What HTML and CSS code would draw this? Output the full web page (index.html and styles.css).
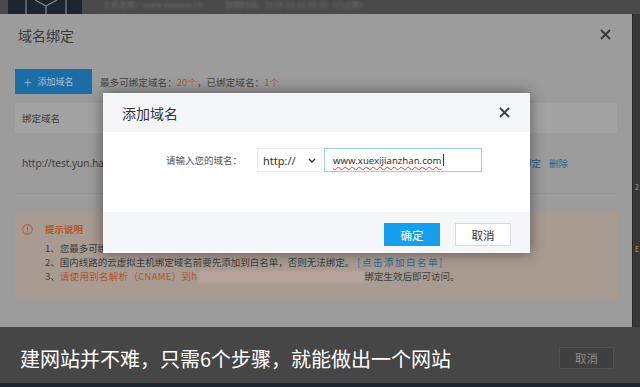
FILE: index.html
```html
<!DOCTYPE html>
<html lang="zh-CN">

<head>
    <meta charset="UTF-8">
    <title>域名绑定</title>
    <link rel="stylesheet" href="styles.css">
</head>

<body>
    <div class="screen">
        <!-- Верхняя полоска страницы за диалогом -->
        <div class="topbar">
            <div class="logo">
                <svg width="74" height="14" viewBox="0 0 74 14" fill="none" stroke="#7d8893" stroke-width="1.2">
                    <line x1="18" y1="0" x2="18" y2="14"></line>
                    <line x1="58" y1="0" x2="58" y2="14"></line>
                    <line x1="27" y1="0" x2="38" y2="6"></line>
                    <line x1="49" y1="0" x2="38" y2="6"></line>
                    <line x1="38" y1="6" x2="38" y2="14"></line>
                </svg>
            </div>
            <div class="top-text">
                <span>主机名称：www.xxxxxxx.cn</span>
                <span>到期时间：2018-10-01 00:00（已过期）</span>
            </div>
        </div>

        <div class="stage">
            <!-- Диалог «域名绑定» под затемнением -->
            <div class="dialog-bg">
                <div class="bg-head">
                    <span class="bg-title">域名绑定</span>
                    <svg class="close" width="11" height="11" viewBox="0 0 11 11" stroke="#3a3a3a" stroke-width="2">
                        <line x1="1" y1="1" x2="10" y2="10"></line>
                        <line x1="10" y1="1" x2="1" y2="10"></line>
                    </svg>
                </div>
                <div class="bg-body">
                    <div class="toolbar">
                        <div class="add-btn"><span class="plus">+</span><span>添加域名</span></div>
                        <div class="quota">最多可绑定域名：<em>20个</em>，已绑定域名：<em>1个</em></div>
                    </div>
                    <div class="table">
                        <div class="th">绑定域名</div>
                        <div class="tr">
                            <span class="url">http://test.yun.hanzhan.com</span>
                            <span class="actions"><span>解除绑定</span><span>删除</span></span>
                        </div>
                    </div>
                    <div class="tips">
                        <div class="tips-title">
                            <svg width="11" height="11" viewBox="0 0 11 11" fill="none" stroke="#b5552a">
                                <circle cx="5.5" cy="5.5" r="4.8"></circle>
                                <line x1="5.5" y1="2.8" x2="5.5" y2="6.4"></line>
                                <line x1="5.5" y1="7.4" x2="5.5" y2="8.4"></line>
                            </svg>
                            <span>提示说明</span>
                        </div>
                        <ul class="tips-list">
                            <li>1、您最多可绑定20个域名，超出后需要升级主机套餐。</li>
                            <li>2、国内线路的云虚拟主机绑定域名前要先添加到白名单，否则无法绑定。<span class="link">[点击添加白名单]</span></li>
                            <li>3、<span class="warn">请使用别名解析（CNAME）到h</span><span class="masked"></span>绑定生效后即可访问。</li>
                        </ul>
                    </div>
                </div>
            </div>
            <div class="edge">
                <span class="edge-mark first">2</span>
                <span class="edge-mark">E</span>
            </div>
        </div>

        <!-- Диалог «添加域名» поверх всего -->
        <div class="add-dialog">
            <div class="add-head">
                <span class="add-title">添加域名</span>
                <svg width="11" height="11" viewBox="0 0 11 11" stroke="#444" stroke-width="2">
                    <line x1="1" y1="1" x2="10" y2="10"></line>
                    <line x1="10" y1="1" x2="1" y2="10"></line>
                </svg>
            </div>
            <div class="add-body">
                <span class="field-label">请输入您的域名：</span>
                <div class="select">
                    <span>http://</span>
                    <svg width="8" height="5" viewBox="0 0 8 5" fill="none" stroke="#333" stroke-width="1.4">
                        <polyline points="1,1 4,4 7,1"></polyline>
                    </svg>
                </div>
                <div class="input"><span class="typed">www.xuexijianzhan.com</span><span class="caret"></span></div>
            </div>
            <div class="add-foot">
                <div class="btn btn-ok">确定</div>
                <div class="btn btn-cancel">取消</div>
            </div>
        </div>

        <!-- Субтитр внизу -->
        <div class="caption">
            <span class="caption-text">建网站并不难，只需6个步骤，就能做出一个网站</span>
            <div class="caption-btn">取消</div>
        </div>
    </div>
</body>

</html>
```

FILE: styles.css
```css
/* Общие стили */
body {
    margin: 0;
    padding: 0;
    background-color: #3a3a3a;
    font-family: "Noto Sans CJK SC", "Noto Sans", sans-serif;
    overflow: hidden;
}

.screen {
    position: relative;
    width: 640px;
    height: 387px;
    display: flex;
    flex-direction: column;
    overflow: hidden;
}

/* Верхняя полоска */
.topbar {
    height: 14px;
    display: flex;
    background-color: #4a4a4a;
    overflow: hidden;
    flex-shrink: 0;
}

.logo {
    margin-left: 8px;
    width: 74px;
    height: 14px;
    background-color: #1d2630;
}

.logo svg {
    display: block;
}

.top-text {
    margin-left: 21px;
    display: flex;
    gap: 22px;
    color: #6c6c6c;
    font-size: 8px;
    line-height: 9px;
    filter: blur(0.8px);
}

.stage {
    flex: 1;
    display: flex;
}

/* Затемнённый диалог */
.dialog-bg {
    width: 632px;
    background-color: #9c9c9c;
    display: flex;
    flex-direction: column;
}

.edge {
    flex: 1;
    background-color: #373737;
    border-left: 1px solid #262626;
    display: flex;
    flex-direction: column;
    overflow: hidden;
    color: #9a9a9a;
    font-size: 7px;
    line-height: 9px;
}

.edge-mark {
    margin-left: 2px;
    margin-top: 53px;
}

.edge-mark.first {
    margin-top: 169px;
}

.bg-head {
    height: 41px;
    display: flex;
    align-items: center;
    justify-content: space-between;
    padding: 0 21px 0 18px;
}

.bg-title {
    font-size: 14px;
    color: #3b3b3b;
}

.bg-body {
    padding: 14px 15px 0;
}

.toolbar {
    display: flex;
    align-items: center;
    gap: 8px;
    height: 25px;
}

.add-btn {
    width: 77px;
    height: 25px;
    box-sizing: border-box;
    padding-left: 9px;
    display: flex;
    align-items: center;
    gap: 6px;
    background-color: #1b6da6;
    color: #a6c0d4;
    font-size: 9px;
}

.add-btn .plus {
    font-size: 14px;
    font-weight: 300;
}

.quota {
    font-size: 9.6px;
    color: #444;
}

.quota em {
    font-style: normal;
    color: #b85a2b;
}

.table {
    margin-top: 9px;
}

.th {
    height: 30px;
    display: flex;
    align-items: center;
    padding-left: 7px;
    background-color: #a3a3a3;
    font-size: 9.5px;
    color: #3d3d3d;
}

.tr {
    height: 60px;
    display: flex;
    align-items: center;
    justify-content: space-between;
    padding: 0 49px 0 7px;
    border-bottom: 1px solid #939393;
}

.url {
    font-family: "Noto Sans", sans-serif;
    font-size: 10px;
    color: #3d3d3d;
}

.actions {
    display: flex;
    gap: 8px;
    font-size: 9.5px;
    color: #1f6597;
}

/* Блок подсказок */
.tips {
    margin-top: 18px;
    height: 88px;
    box-sizing: border-box;
    padding: 10px 7px;
    background-color: #a89b92;
    font-size: 9.5px;
    color: #3f3f3f;
}

.tips-title {
    display: flex;
    align-items: center;
    gap: 12px;
    height: 14px;
    color: #b5552a;
    font-weight: bold;
}

.tips-list {
    margin: 5px 0 0 23px;
    padding: 0;
    list-style: none;
    line-height: 14px;
}

.tips-list .link {
    margin-left: 3px;
    letter-spacing: 1.5px;
    color: #2a6898;
}

.tips-list .warn {
    letter-spacing: 0.3px;
    color: #b5552a;
}

.masked {
    display: inline-block;
    width: 165px;
    height: 12px;
    margin-left: 2px;
    vertical-align: middle;
    background-color: #b6a49e;
    filter: blur(1px);
}

/* Диалог добавления домена */
.add-dialog {
    position: absolute;
    left: 103px;
    top: 93px;
    width: 427px;
    background-color: #fff;
    box-shadow: 0 0 14px rgba(0, 0, 0, 0.45);
}

.add-head {
    height: 39px;
    display: flex;
    align-items: center;
    justify-content: space-between;
    padding: 0 20px 0 19px;
    background-color: #f4f6f7;
}

.add-title {
    font-size: 14px;
    color: #333;
}

.add-body {
    height: 80px;
    box-sizing: border-box;
    padding-top: 16px;
    display: flex;
    align-items: flex-start;
}

.field-label {
    width: 139px;
    text-align: right;
    font-size: 9.5px;
    line-height: 24px;
    color: #555;
}

.select {
    margin-left: 15px;
    width: 65px;
    height: 24px;
    box-sizing: border-box;
    padding: 0 5px;
    display: flex;
    align-items: center;
    justify-content: space-between;
    border: 1px solid #ececec;
    font-family: "Noto Sans", sans-serif;
    font-size: 11px;
    color: #333;
}

.input {
    margin-left: 2px;
    width: 158px;
    height: 24px;
    box-sizing: border-box;
    padding-left: 8px;
    display: flex;
    align-items: center;
    border: 1px solid #9ccbe5;
    font-family: "Noto Sans", sans-serif;
    font-size: 9.6px;
    color: #333;
}

.typed {
    text-decoration: underline wavy #d9453a;
    text-decoration-thickness: 1px;
    text-underline-offset: 2px;
    text-decoration-skip-ink: none;
}

.caret {
    width: 1px;
    height: 12px;
    margin-left: 1px;
    background-color: #333;
}

.add-foot {
    height: 41px;
    box-sizing: border-box;
    padding: 11px 19px 0 0;
    display: flex;
    justify-content: flex-end;
    gap: 15px;
    background-color: #f4f6f7;
}

.btn {
    width: 56px;
    height: 23px;
    box-sizing: border-box;
    display: flex;
    align-items: center;
    justify-content: center;
    font-size: 11.5px;
}

.btn-ok {
    background-color: #14a0ef;
    color: #fff;
}

.btn-cancel {
    background-color: #fff;
    border: 1px solid #d9d9d9;
    color: #333;
}

/* Субтитр */
.caption {
    position: absolute;
    left: 0;
    top: 327px;
    width: 640px;
    height: 60px;
    box-sizing: border-box;
    padding: 6px 26px 0 20px;
    display: flex;
    align-items: center;
    justify-content: space-between;
    background-color: #464646;
    border-bottom: 4px solid #1f272c;
}

.caption-text {
    font-size: 20px;
    color: #fff;
}

.caption-btn {
    width: 55px;
    height: 22px;
    box-sizing: border-box;
    display: flex;
    align-items: center;
    justify-content: center;
    background-color: #404040;
    border: 1px solid #505050;
    color: #8a8a8a;
    font-size: 11.5px;
}
```
